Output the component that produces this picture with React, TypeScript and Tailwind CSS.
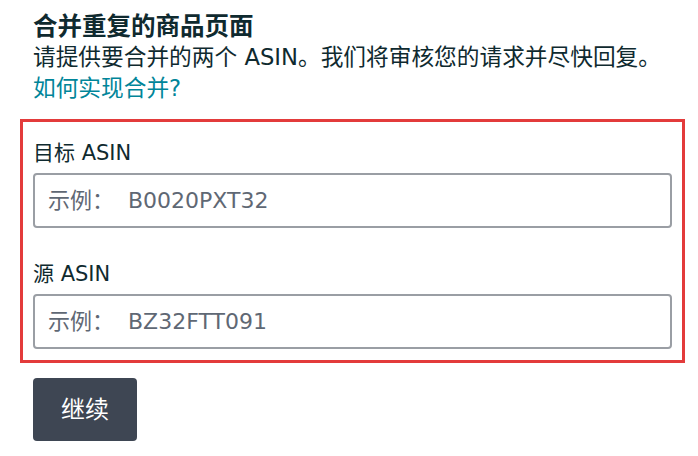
export default function App() {
  return (
    <div
      className="min-h-screen bg-white pl-[20px] pr-[13px] pt-[11px] text-[#0f2a2f]"
      style={{ fontFamily: '"DejaVu Sans", "Noto Sans CJK SC", sans-serif' }}
    >
      {/* Header */}
      <div className="pl-[13px]">
        <h1 className="text-[24.5px] font-bold leading-[31px]">合并重复的商品页面</h1>
        <p className="text-[22.7px] leading-[31px]">
          请提供要合并的两个 ASIN。我们将审核您的请求并尽快回复。
        </p>
        <a href="#" className="block text-[22.7px] leading-[31px] text-[#008599]">
          如何实现合并?
        </a>
      </div>

      {/* Form box */}
      <div className="mt-[15px] border-[3px] border-[#e33b3b] px-[10px] pb-[11px] pt-[17px]">
        <Field label="目标 ASIN" placeholder={"示例：\u00a0\u00a0B0020PXT32"} />
        <div className="h-[32px]" />
        <Field label="源 ASIN" placeholder={"示例：\u00a0\u00a0BZ32FTT091"} />
      </div>

      <div className="pl-[13px] pt-[15px]">
        <button className="h-[63px] w-[104px] rounded-[4px] bg-[#3e4653] text-[24px] text-white">
          继续
        </button>
      </div>
    </div>
  );
}

function Field({ label, placeholder }: { label: string; placeholder: string }) {
  return (
    <div>
      <label className="block text-[21px] leading-[28px]">{label}</label>
      <input
        type="text"
        placeholder={placeholder}
        className="mt-[6px] block h-[55px] w-full rounded-[4px] border-[2px] border-[#9a9ea4] bg-white px-[13px] text-[22px] placeholder:text-[#5f6874] outline-none"
      />
    </div>
  );
}
